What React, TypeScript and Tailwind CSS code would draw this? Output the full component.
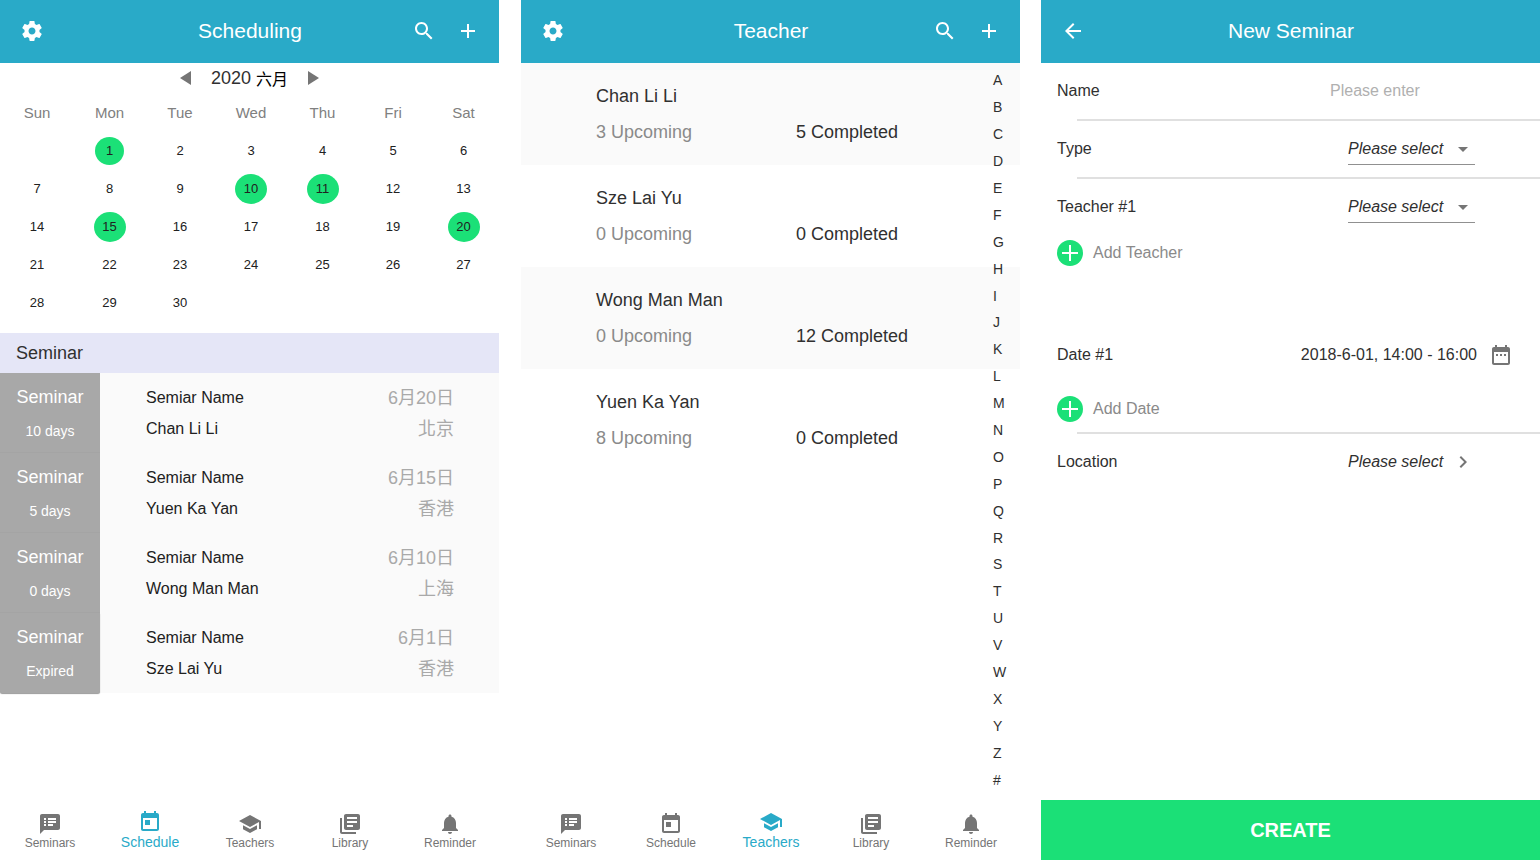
import type { ReactNode } from "react";

const paths = {
  settings:
    "M19.43 12.98c.04-.32.07-.64.07-.98s-.03-.66-.07-.98l2.11-1.65c.19-.15.24-.42.12-.64l-2-3.46c-.12-.22-.39-.3-.61-.22l-2.49 1c-.52-.4-1.08-.73-1.69-.98l-.38-2.65C14.46 2.18 14.25 2 14 2h-4c-.25 0-.46.18-.49.42l-.38 2.65c-.61.25-1.17.59-1.69.98l-2.49-1c-.23-.09-.49 0-.61.22l-2 3.46c-.13.22-.07.49.12.64l2.11 1.65c-.04.32-.07.65-.07.98s.03.66.07.98l-2.11 1.65c-.19.15-.24.42-.12.64l2 3.46c.12.22.39.3.61.22l2.49-1c.52.4 1.08.73 1.69.98l.38 2.65c.03.24.24.42.49.42h4c.25 0 .46-.18.49-.42l.38-2.65c.61-.25 1.17-.59 1.69-.98l2.49 1c.23.09.49 0 .61-.22l2-3.46c.12-.22.07-.49-.12-.64l-2.11-1.65zM12 15.5c-1.93 0-3.5-1.57-3.5-3.5s1.57-3.5 3.5-3.5 3.5 1.57 3.5 3.5-1.57 3.5-3.5 3.5z",
  search:
    "M15.5 14h-.79l-.28-.27C15.41 12.59 16 11.11 16 9.5 16 5.91 13.09 3 9.5 3S3 5.91 3 9.5 5.91 16 9.5 16c1.61 0 3.09-.59 4.23-1.57l.27.28v.79l5 4.99L20.49 19l-4.99-5zm-6 0C7.01 14 5 11.99 5 9.5S7.01 5 9.5 5 14 7.01 14 9.5 11.99 14 9.5 14z",
  add: "M19 13h-6v6h-2v-6H5v-2h6V5h2v6h6v2z",
  back: "M20 11H7.83l5.59-5.59L12 4l-8 8 8 8 1.41-1.41L7.83 13H20v-2z",
  notes:
    "M20 2H4c-1.1 0-1.99.9-1.99 2L2 22l4-4h14c1.1 0 2-.9 2-2V4c0-1.1-.9-2-2-2zM8 14H6v-2h2v2zm0-3H6V9h2v2zm0-3H6V6h2v2zm7 6h-5v-2h5v2zm3-3h-8V9h8v2zm0-3h-8V6h8v2z",
  today:
    "M19 3h-1V1h-2v2H8V1H6v2H5c-1.11 0-1.99.9-1.99 2L3 19c0 1.1.89 2 2 2h14c1.1 0 2-.9 2-2V5c0-1.1-.9-2-2-2zm0 16H5V8h14v11zM7 10h5v5H7z",
  school: "M5 13.18v4L12 21l7-3.82v-4L12 17l-7-3.82zM12 3L1 9l11 6 9-4.91V17h2V9L12 3z",
  library:
    "M4 6H2v14c0 1.1.9 2 2 2h14v-2H4V6zm16-4H8c-1.1 0-2 .9-2 2v12c0 1.1.9 2 2 2h12c1.1 0 2-.9 2-2V4c0-1.1-.9-2-2-2zm-1 9H9V9h10v2zm-4 4H9v-2h6v2zm4-8H9V5h10v2z",
  bell: "M12 22c1.1 0 2-.9 2-2h-4c0 1.1.89 2 2 2zm6-6v-5c0-3.07-1.64-5.64-4.5-6.32V4c0-.83-.67-1.5-1.5-1.5s-1.5.67-1.5 1.5v.68C7.63 5.36 6 7.92 6 11v5l-2 2v1h16v-1l-2-2z",
  dateRange:
    "M9 11H7v2h2v-2zm4 0h-2v2h2v-2zm4 0h-2v2h2v-2zm2-7h-1V2h-2v2H8V2H6v2H5c-1.11 0-1.99.9-1.99 2L3 20c0 1.1.89 2 2 2h14c1.1 0 2-.9 2-2V6c0-1.1-.9-2-2-2zm0 16H5V9h14v11z",
  dropDown: "M7 10l5 5 5-5z",
  chevron: "M10 6L8.59 7.41 13.17 12l-4.58 4.59L10 18l6-6z",
};

type IconName = keyof typeof paths;

function Icon({ name, className = "" }: { name: IconName; className?: string }) {
  return (
    <svg viewBox="0 0 24 24" fill="currentColor" aria-hidden="true" className={`size-6 shrink-0 ${className}`}>
      <path d={paths[name]} />
    </svg>
  );
}

function IconButton({ name, label }: { name: IconName; label: string }) {
  return (
    <button type="button" aria-label={label}>
      <Icon name={name} />
    </button>
  );
}

function TopBar({ title, left, right }: { title: string; left: ReactNode; right?: ReactNode }) {
  return (
    <header className="grid h-[63px] shrink-0 grid-cols-[1fr_auto_1fr] items-center bg-[#29aac8] pr-[19px] pb-px pl-5 text-white">
      <div className="flex">{left}</div>
      <h1 className="text-[21px] leading-6">{title}</h1>
      <div className="flex justify-end gap-5">{right}</div>
    </header>
  );
}

const searchAndAdd = (
  <>
    <IconButton name="search" label="Search" />
    <IconButton name="add" label="Add" />
  </>
);

const tabs: { label: string; icon: IconName }[] = [
  { label: "Seminars", icon: "notes" },
  { label: "Schedule", icon: "today" },
  { label: "Teachers", icon: "school" },
  { label: "Library", icon: "library" },
  { label: "Reminder", icon: "bell" },
];

function BottomNav({ active }: { active: string }) {
  return (
    <nav className="-mr-px grid h-[60px] shrink-0 grid-cols-5">
      {tabs.map((tab) =>
        tab.label === active ? (
          <button
            key={tab.label}
            type="button"
            aria-current="page"
            className="flex flex-col items-center pt-[10px] text-sm leading-4 text-[#29aac8]"
          >
            <Icon name={tab.icon} />
            {tab.label}
          </button>
        ) : (
          <button
            key={tab.label}
            type="button"
            className="flex flex-col items-center pt-3 text-xs leading-[14px] text-[#757575]"
          >
            <Icon name={tab.icon} />
            {tab.label}
          </button>
        ),
      )}
    </nav>
  );
}

const weekdays = ["Sun", "Mon", "Tue", "Wed", "Thu", "Fri", "Sat"];
const weeks = [
  [0, 1, 2, 3, 4, 5, 6],
  [7, 8, 9, 10, 11, 12, 13],
  [14, 15, 16, 17, 18, 19, 20],
  [21, 22, 23, 24, 25, 26, 27],
  [28, 29, 30, 0, 0, 0, 0],
];
const booked = [1, 10, 11, 15, 20];

function Day({ day }: { day: number }) {
  if (day === 0) return null;
  if (!booked.includes(day)) return <>{day}</>;
  const size = day < 10 ? "h-7 w-[29px]" : "h-[30px] w-8";
  return (
    <span className={`mx-auto flex items-center justify-center rounded-[50%] bg-[#1be077] ${size}`}>{day}</span>
  );
}

function Calendar() {
  return (
    <section aria-label="Calendar" className="pb-[11px]">
      <div className="flex h-[31px] items-center justify-center gap-5 pb-px text-lg leading-[22px] text-[#303030]">
        <button type="button" aria-label="Previous month" className="text-[#757575]">
          <svg viewBox="0 0 11 14" fill="currentColor" className="h-[14px] w-[11px]">
            <path d="M11 0v14L0 7z" />
          </svg>
        </button>
        <span className="flex items-center gap-[5px]">
          2020
          <span className="pt-1 text-base leading-5 text-black">六月</span>
        </span>
        <button type="button" aria-label="Next month" className="text-[#757575]">
          <svg viewBox="0 0 11 14" fill="currentColor" className="h-[14px] w-[11px]">
            <path d="M0 0v14l11-7z" />
          </svg>
        </button>
      </div>
      <table className="w-full table-fixed text-center">
        <colgroup>
          <col className="w-[74px]" />
          <col className="w-[71px]" />
          <col className="w-[70px]" />
          <col className="w-[72px]" />
          <col className="w-[71px]" />
          <col className="w-[70px]" />
          <col className="w-[71px]" />
        </colgroup>
        <thead>
          <tr className="h-[38px] text-[15px] text-[#808080]">
            {weekdays.map((name) => (
              <th key={name} scope="col" className="p-0 font-normal">
                {name}
              </th>
            ))}
          </tr>
        </thead>
        <tbody>
          {weeks.map((week, row) => (
            <tr key={row} className="h-[38px] text-[13px] leading-4 text-[#212121]">
              {week.map((day, column) => (
                <td key={column} className="p-0">
                  <Day day={day} />
                </td>
              ))}
            </tr>
          ))}
        </tbody>
      </table>
    </section>
  );
}

const seminars = [
  { due: "10 days", teacher: "Chan Li Li", date: "6月20日", city: "北京" },
  { due: "5 days", teacher: "Yuen Ka Yan", date: "6月15日", city: "香港" },
  { due: "0 days", teacher: "Wong Man Man", date: "6月10日", city: "上海" },
  { due: "Expired", teacher: "Sze Lai Yu", date: "6月1日", city: "香港" },
];

function SchedulingScreen() {
  return (
    <section className="mr-px flex flex-1 flex-col">
      <TopBar title="Scheduling" left={<IconButton name="settings" label="Settings" />} right={searchAndAdd} />
      <main className="flex-1">
        <Calendar />
        <h2 className="flex h-10 items-center bg-[#e5e6f7] px-4 text-lg text-[#303030]">Seminar</h2>
        <ul className="bg-[#fafafa]">
          {seminars.map((item) => (
            <li key={item.date} className="group flex h-20">
              <div className="flex w-[100px] flex-col items-center gap-[14px] bg-[#a8a8a8] pt-[14px] text-white group-last:rounded-b-xs group-last:shadow-[0_1px_1px_rgba(0,0,0,0.4)] group-not-last:border-b group-not-last:border-[#a4a4a4]">
                <span className="text-lg leading-5">Seminar</span>
                <span className="text-sm leading-5">{item.due}</span>
              </div>
              <div className="flex flex-1 flex-col gap-[11px] pt-[15px] pl-[46px] text-base leading-5 text-[#212121]">
                <span>Semiar Name</span>
                <span>{item.teacher}</span>
              </div>
              <div className="flex flex-col items-end gap-[11px] pt-[15px] pr-[45px] text-lg leading-5 text-[#a9a9a9]">
                <span>{item.date}</span>
                <span>{item.city}</span>
              </div>
            </li>
          ))}
        </ul>
      </main>
      <BottomNav active="Schedule" />
    </section>
  );
}

const teachers = [
  { name: "Chan Li Li", upcoming: 3, completed: 5 },
  { name: "Sze Lai Yu", upcoming: 0, completed: 0 },
  { name: "Wong Man Man", upcoming: 0, completed: 12 },
  { name: "Yuen Ka Yan", upcoming: 8, completed: 0 },
];
const letters = "ABCDEFGHIJKLMNOPQRSTUVWXYZ#".split("");

function TeacherScreen() {
  return (
    <section className="flex flex-1 flex-col">
      <TopBar title="Teacher" left={<IconButton name="settings" label="Settings" />} right={searchAndAdd} />
      <main className="relative flex-1">
        <ul>
          {teachers.map((teacher) => (
            <li
              key={teacher.name}
              className="flex h-[102px] flex-col gap-3 pt-[21px] pl-[75px] text-lg leading-6 text-[#303030] odd:bg-[#fafafa]"
            >
              <span>{teacher.name}</span>
              <div className="flex">
                <span className="w-[200px] text-[#8a8a8a]">{teacher.upcoming} Upcoming</span>
                <span>{teacher.completed} Completed</span>
              </div>
            </li>
          ))}
        </ul>
        <ol className="absolute top-1 right-[11px] bottom-[7px] flex w-4 flex-col text-sm leading-none text-[#303030]">
          {letters.map((letter) => (
            <li key={letter} className="flex flex-1 items-center">
              {letter}
            </li>
          ))}
        </ol>
      </main>
      <BottomNav active="Teachers" />
    </section>
  );
}

function Divider() {
  return <hr className="ml-9 border-0 border-t-2 border-[#e0e0e0]" />;
}

function SelectRow({ id, label }: { id: string; label: string }) {
  return (
    <div className="flex h-14 items-center justify-between pr-[65px] pl-4">
      <label htmlFor={id}>{label}</label>
      <div className="relative w-[127px]">
        <select
          id={id}
          className="block h-8 w-full appearance-none border-b border-[#909090] bg-transparent pr-6 italic outline-none"
        >
          <option>Please select</option>
        </select>
        <Icon name="dropDown" className="pointer-events-none absolute top-1 right-0 text-[#757575]" />
      </div>
    </div>
  );
}

function AddButton({ label }: { label: string }) {
  return (
    <button type="button" className="flex h-9 items-center gap-[10px] pl-4 text-[#8a8a8a]">
      <span className="flex size-[26px] items-center justify-center rounded-full bg-[#1be077] text-white">
        <svg viewBox="0 0 16 16" fill="currentColor" aria-hidden="true" className="size-4">
          <path d="M7 0h2v7h7v2H9v7H7V9H0V7h7z" />
        </svg>
      </span>
      {label}
    </button>
  );
}

function NewSeminarScreen() {
  return (
    <section className="flex flex-1 flex-col">
      <TopBar title="New Seminar" left={<IconButton name="back" label="Back" />} />
      <form className="flex flex-1 flex-col text-base leading-5 text-[#303030]">
        <div className="flex h-14 items-center justify-between pr-4 pl-4">
          <label htmlFor="name">Name</label>
          <input
            id="name"
            type="text"
            placeholder="Please enter"
            className="w-[194px] bg-transparent outline-none placeholder:text-[#b0b0b0]"
          />
        </div>
        <Divider />
        <SelectRow id="type" label="Type" />
        <Divider />
        <SelectRow id="teacher" label="Teacher #1" />
        <AddButton label="Add Teacher" />
        <div className="mt-14 flex h-14 items-center justify-between pr-[27px] pl-4">
          <span>Date #1</span>
          <button type="button" className="flex items-center gap-3">
            2018-6-01, 14:00 - 16:00
            <Icon name="dateRange" className="text-[#757575]" />
          </button>
        </div>
        <div className="flex pt-2 pb-[5px]">
          <AddButton label="Add Date" />
        </div>
        <Divider />
        <div className="flex h-14 items-center justify-between pr-[65px] pl-4">
          <span>Location</span>
          <button type="button" className="flex w-[127px] items-center justify-between italic">
            Please select
            <Icon name="chevron" className="text-[#757575]" />
          </button>
        </div>
        <button type="submit" className="mt-auto h-[60px] bg-[#1be077] text-xl font-bold text-white">
          CREATE
        </button>
      </form>
    </section>
  );
}

export default function App() {
  return (
    <div className="flex min-h-screen gap-[21px] bg-white font-['Liberation_Sans','Noto_Sans_CJK_TC',sans-serif]">
      <SchedulingScreen />
      <TeacherScreen />
      <NewSeminarScreen />
    </div>
  );
}
